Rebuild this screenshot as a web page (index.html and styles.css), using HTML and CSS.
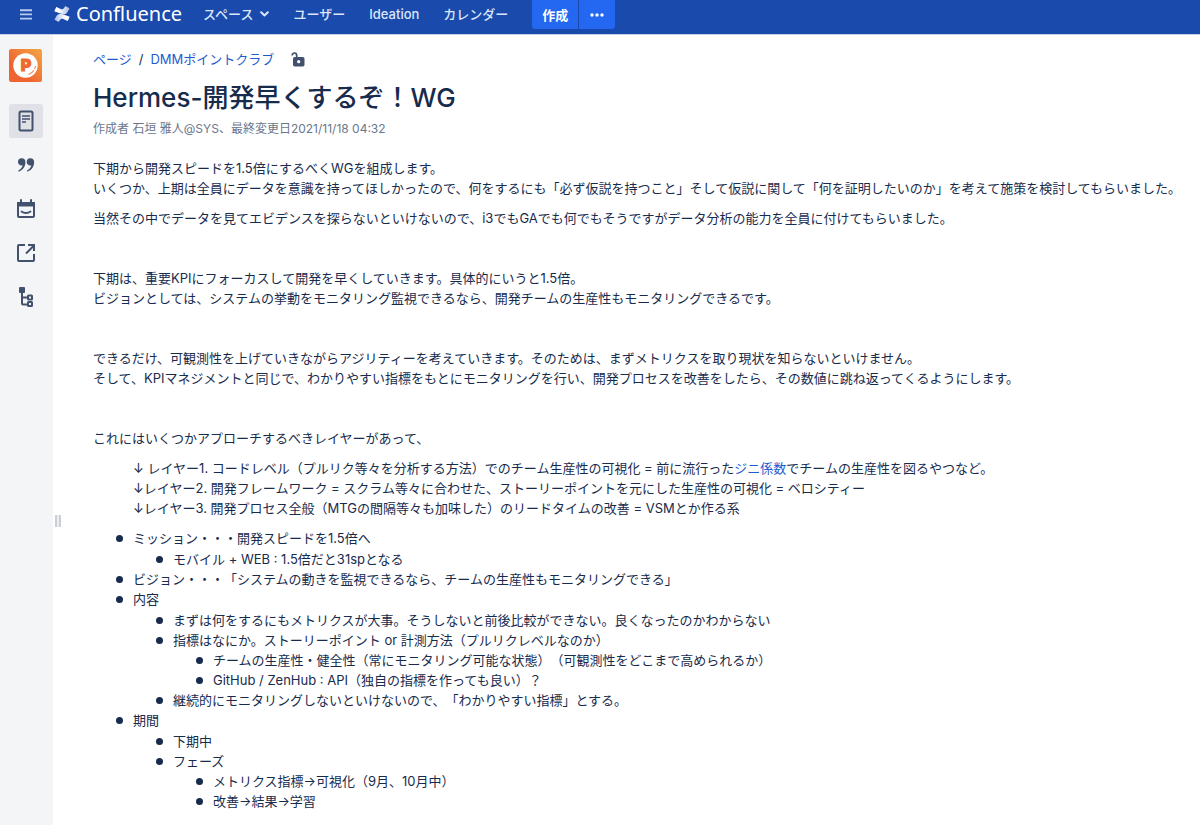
FILE: index.html
```
<!DOCTYPE html>
<html lang="ja">
<head>
    <meta charset="UTF-8">
    <meta name="viewport" content="width=device-width, initial-scale=1.0">
    <title>Hermes-開発早くするぞ！WG - Confluence</title>
    <link rel="stylesheet" href="styles.css">
</head>
<body>

<header class="header">
    <button type="button" class="menu-btn" aria-label="メニュー">
        <svg width="12" height="11" viewBox="0 0 12 11"><path d="M0 1.2h12M0 5.4h12M0 9.6h12" stroke="#b9cbef" stroke-width="1.9"/></svg>
    </button>
    <a href="#" class="logo">
        <svg width="16" height="16" viewBox="0 0 16 16">
            <defs>
                <linearGradient id="wave-top" x1="0" y1="0" x2="1" y2="0">
                    <stop offset="0.3" stop-color="#fff"/>
                    <stop offset="1" stop-color="#a9bee8"/>
                </linearGradient>
                <linearGradient id="wave-bottom" x1="1" y1="0" x2="0" y2="0">
                    <stop offset="0.3" stop-color="#fff"/>
                    <stop offset="1" stop-color="#a9bee8"/>
                </linearGradient>
            </defs>
            <path d="M.5 4.700 2 1.500c.2-.4.6-.5 1-.3l3.700 1.700c1.500.7 2.400.5 3.300-.8L11.100.6c.2-.3.6-.4 1-.2l2.900 1.500c.4.200.5.6.3.9l-1.500 2.600c-1.600 2.900-4.100 3.500-7.200 2.100L.8 5.600c-.4-.2-.5-.5-.3-.9z" fill="url(#wave-top)"/>
            <path d="M15.500 11.300 14 14.500c-.2.4-.6.5-1 .3l-3.700-1.700c-1.500-.7-2.400-.5-3.300.8l-1.100 1.500c-.2.3-.6.4-1 .2L1 14.100c-.4-.2-.5-.6-.3-.9l1.500-2.600C3.800 7.700 6.300 7.100 9.400 8.500l5.800 1.900c.4.200.5.500.3.900z" fill="url(#wave-bottom)"/>
        </svg>
        <span>Confluence</span>
    </a>
    <nav class="nav">
        <a href="#">スペース
            <svg width="9" height="6" viewBox="0 0 9 6"><path d="M1.2 1.2 4.5 4.500 7.800 1.200" fill="none" stroke="#dce6fa" stroke-width="2" stroke-linecap="round" stroke-linejoin="round"/></svg>
        </a>
        <a href="#">ユーザー</a>
        <a href="#">Ideation</a>
        <a href="#">カレンダー</a>
    </nav>
    <div class="create">
        <button type="button" class="create-btn">作成</button>
        <button type="button" class="more-btn" aria-label="その他">
            <svg width="14" height="4" viewBox="0 0 14 4" fill="#fff"><circle cx="2" cy="2" r="1.7"/><circle cx="7" cy="2" r="1.7"/><circle cx="12" cy="2" r="1.7"/></svg>
        </button>
    </div>
</header>

<div class="layout">
    <aside class="sidebar">
        <a href="#" class="space-logo" aria-label="DMMポイントクラブ">
            <svg width="33" height="33" viewBox="0 0 33 33">
                <defs>
                    <linearGradient id="orange" x1="0" y1="1" x2="1" y2="0">
                        <stop offset="0.3" stop-color="#ee6330"/>
                        <stop offset="1" stop-color="#f4a545"/>
                    </linearGradient>
                </defs>
                <rect width="33" height="33" rx="2" fill="url(#orange)"/>
                <circle cx="16.5" cy="16.5" r="12.2" fill="#fff"/>
                <text x="17" y="22" text-anchor="middle" class="space-letter">P</text>
                <path d="M19.500 25.500c3.800-1.300 6.300-4.300 7-8.500" fill="none" stroke="#f0884f" stroke-width="1.2" stroke-dasharray="7 1.5"/>
            </svg>
        </a>
        <a href="#" class="side-link active" aria-label="ページ">
            <svg width="16" height="22" viewBox="0 0 16 22" fill="none" stroke="#42526e"><rect x="1.5" y="1.5" width="13" height="19" rx="1.5" stroke-width="2"/><path d="M4 6h8M4 9h8M4 12h4" stroke-width="1.7"/></svg>
        </a>
        <a href="#" class="side-link" aria-label="ブログ">
            <svg width="18" height="16" viewBox="0 0 18 16" fill="#42526e"><path d="M1 5a3.700 3.700 0 0 1 7.400-.2c.2 4.700-2.300 8.200-6.300 9.700-.9.200-1.200-.8-.4-1.300 2.300-1.400 3.500-2.900 3.900-4.700C3.300 9.100 1 7.400 1 5zM9.700 5a3.700 3.700 0 0 1 7.400-.2c.2 4.700-2.300 8.200-6.300 9.700-.9.200-1.200-.8-.4-1.300 2.300-1.400 3.500-2.900 3.900-4.700C12 9.100 9.700 7.400 9.700 5z"/></svg>
        </a>
        <a href="#" class="side-link" aria-label="カレンダー">
            <svg width="20" height="20" viewBox="0 0 20 20" fill="none" stroke="#42526e" stroke-width="2"><rect x="2" y="4" width="16" height="14" rx="1"/><path d="M1 3h18v4.500H1z" fill="#42526e" stroke="none"/><path d="M5 1v3M15 1v3" stroke-linecap="round"/><path d="M5.500 12.500c2.500 2 6.500 2 9 0" stroke-width="1.8" stroke-linecap="round"/></svg>
        </a>
        <a href="#" class="side-link" aria-label="ショートカット">
            <svg width="20" height="20" viewBox="0 0 20 20" fill="none" stroke="#42526e" stroke-width="2"><path d="M9 2H3a1 1 0 0 0-1 1v14a1 1 0 0 0 1 1h14a1 1 0 0 0 1-1v-6M10 10.500 17.500 3M12 2h6v6"/></svg>
        </a>
        <a href="#" class="side-link" aria-label="ページツリー">
            <svg width="16" height="20" viewBox="0 0 16 20" fill="none" stroke="#42526e" stroke-width="2"><rect x="1" y="0" width="6" height="6" rx="1" fill="#42526e" stroke="none"/><path d="M4 5v11.500a1 1 0 0 0 1 1h5M4 10.500h6"/><rect x="10" y="8.500" width="4" height="4" rx="0.5"/><rect x="10" y="15" width="4" height="4" rx="0.5"/></svg>
        </a>
    </aside>
    <span class="resize-handle"></span>

    <main class="content">
        <div class="breadcrumb">
            <a href="#">ページ</a>
            <span>/</span>
            <a href="#">DMMポイントクラブ</a>
            <svg class="lock" width="14" height="15" viewBox="0 0 14 15"><path d="M1.200 3.500C1.200 1.700 2.300 1 3.400 1s2.300.7 2.300 2.500V6" fill="none" stroke="#42526e" stroke-width="1.7"/><rect x="2" y="5" width="11.5" height="9.5" rx="1.7" fill="#42526e"/><circle cx="7.7" cy="9.7" r="1.6" fill="#fff"/></svg>
        </div>
        <h1>Hermes-開発早くするぞ！WG</h1>
        <div class="meta">作成者 石垣 雅人@SYS、最終変更日2021/11/18 04:32</div>

        <div class="wiki">
            <p>下期から開発スピードを1.5倍にするべくWGを組成します。<br>いくつか、上期は全員にデータを意識を持ってほしかったので、何をするにも「必ず仮説を持つこと」そして仮説に関して「何を証明したいのか」を考えて施策を検討してもらいました。</p>
            <p>当然その中でデータを見てエビデンスを探らないといけないので、i3でもGAでも何でもそうですがデータ分析の能力を全員に付けてもらいました。</p>
            <p><br></p>
            <p>下期は、重要KPIにフォーカスして開発を早くしていきます。具体的にいうと1.5倍。<br>ビジョンとしては、システムの挙動をモニタリング監視できるなら、開発チームの生産性もモニタリングできるです。</p>
            <p><br></p>
            <p>できるだけ、可観測性を上げていきながらアジリティーを考えていきます。そのためは、まずメトリクスを取り現状を知らないといけません。<br>そして、KPIマネジメントと同じで、わかりやすい指標をもとにモニタリングを行い、開発プロセスを改善をしたら、その数値に跳ね返ってくるようにします。</p>
            <p><br></p>
            <p>これにはいくつかアプローチするべきレイヤーがあって、</p>
            <p class="indent">↓ レイヤー1. コードレベル（プルリク等々を分析する方法）でのチーム生産性の可視化 = 前に流行った<a href="#">ジニ係数</a>でチームの生産性を図るやつなど。<br>↓レイヤー2. 開発フレームワーク = スクラム等々に合わせた、ストーリーポイントを元にした生産性の可視化 = ベロシティー<br>↓レイヤー3. 開発プロセス全般（MTGの間隔等々も加味した）のリードタイムの改善 = VSMとか作る系</p>
            <ul class="outline">
                <li>ミッション・・・開発スピードを1.5倍へ
                    <ul>
                        <li>モバイル + WEB : 1.5倍だと31spとなる</li>
                    </ul>
                </li>
                <li>ビジョン・・・「システムの動きを監視できるなら、チームの生産性もモニタリングできる」</li>
                <li>内容
                    <ul>
                        <li>まずは何をするにもメトリクスが大事。そうしないと前後比較ができない。良くなったのかわからない</li>
                        <li>指標はなにか。ストーリーポイント or 計測方法（プルリクレベルなのか）
                            <ul>
                                <li>チームの生産性・健全性（常にモニタリング可能な状態）（可観測性をどこまで高められるか）</li>
                                <li>GitHub / ZenHub : API（独自の指標を作っても良い）？</li>
                            </ul>
                        </li>
                        <li>継続的にモニタリングしないといけないので、「わかりやすい指標」とする。</li>
                    </ul>
                </li>
                <li>期間
                    <ul>
                        <li>下期中</li>
                        <li>フェーズ
                            <ul>
                                <li>メトリクス指標→可視化（9月、10月中）</li>
                                <li>改善→結果→学習</li>
                            </ul>
                        </li>
                    </ul>
                </li>
            </ul>
        </div>
    </main>
</div>

</body>
</html>
```
FILE: styles.css
```
* {
    box-sizing: border-box;
}
body {
    font-family: Inter, 'Noto Sans CJK JP', sans-serif;
    font-size: 13px;
    line-height: 20px;
    color: #172b4d;
    background-color: #ffffff;
    margin: 0;
    min-height: 100vh;
    display: flex;
    flex-direction: column;
    text-spacing-trim: space-all;
}
a {
    color: #1d5bd0;
    text-decoration: none;
}
a:hover {
    text-decoration: underline;
}
button {
    border: none;
    padding: 0;
    font-family: inherit;
    font-size: 13px;
    color: #ffffff;
    cursor: pointer;
}
svg {
    display: block;
    flex: none;
}

/* Header */
.header {
    display: flex;
    align-items: flex-start;
    background-color: #1a4aab;
    height: 35px;
    padding-left: 20px;
    border-bottom: 1px solid #c5d0e6;
}
.menu-btn {
    background: none;
    height: 28px;
}
.logo {
    display: flex;
    align-items: center;
    gap: 6px;
    height: 28px;
    margin-left: 22px;
    font-family: 'Noto Sans', sans-serif;
    font-size: 20px;
    color: #ffffff;
}
.nav {
    display: flex;
    gap: 24px;
    margin: 0 24px 0 21px;
}
.nav a {
    display: flex;
    align-items: center;
    gap: 7px;
    height: 28px;
    color: #dce6fa;
    font-weight: 500;
}
.create {
    display: flex;
    gap: 1px;
}
.create-btn, .more-btn {
    background-color: #2468f2;
    height: 29px;
    font-weight: 600;
}
.create-btn {
    width: 46px;
    border-radius: 0 0 0 3px;
}
.more-btn {
    display: flex;
    align-items: center;
    justify-content: center;
    width: 36px;
    border-radius: 0 0 3px 0;
}

/* Sidebar */
.layout {
    display: flex;
    flex: 1;
}
.sidebar {
    display: flex;
    flex-direction: column;
    align-items: center;
    gap: 10px;
    flex: none;
    width: 53px;
    padding: 14px 2px 0 0;
    background-color: #f4f5f7;
}
.space-logo {
    margin-bottom: 12px;
}
.space-letter {
    font-size: 16px;
    font-weight: 900;
    fill: #ee6a33;
    stroke: #ee6a33;
}
.side-link {
    display: flex;
    align-items: center;
    justify-content: center;
    width: 34px;
    height: 34px;
    border-radius: 3px;
}
.side-link.active {
    background-color: #dfe1e6;
}
.resize-handle {
    position: fixed;
    left: 55px;
    top: 515px;
    width: 6px;
    height: 12px;
    border: solid #c9ced7;
    border-width: 0 2px;
    background-color: #eceef1;
}

/* Page */
.content {
    flex: 1;
    padding: 14px 14px 14px 40px;
}
.breadcrumb {
    display: flex;
    align-items: center;
    gap: 7px;
}
.lock {
    margin-left: 10px;
}
h1 {
    margin: 13px 0 5px;
    font-size: 26px;
    font-weight: 500;
    line-height: 32px;
}
.meta {
    font-size: 12px;
    color: #6b778c;
}
.wiki {
    margin-top: 19px;
}
.wiki p {
    margin: 0 0 10px;
}
.wiki .indent {
    margin-left: 40px;
}
.wiki ul {
    margin: 0;
    padding-left: 40px;
    list-style: none;
}
.wiki .outline > li > ul {
    margin-top: 1px;
}
.wiki li {
    position: relative;
}
.wiki li::before {
    content: '';
    position: absolute;
    left: -17px;
    top: 7px;
    width: 7px;
    height: 7px;
    border-radius: 50%;
    background-color: #172b4d;
}
```
